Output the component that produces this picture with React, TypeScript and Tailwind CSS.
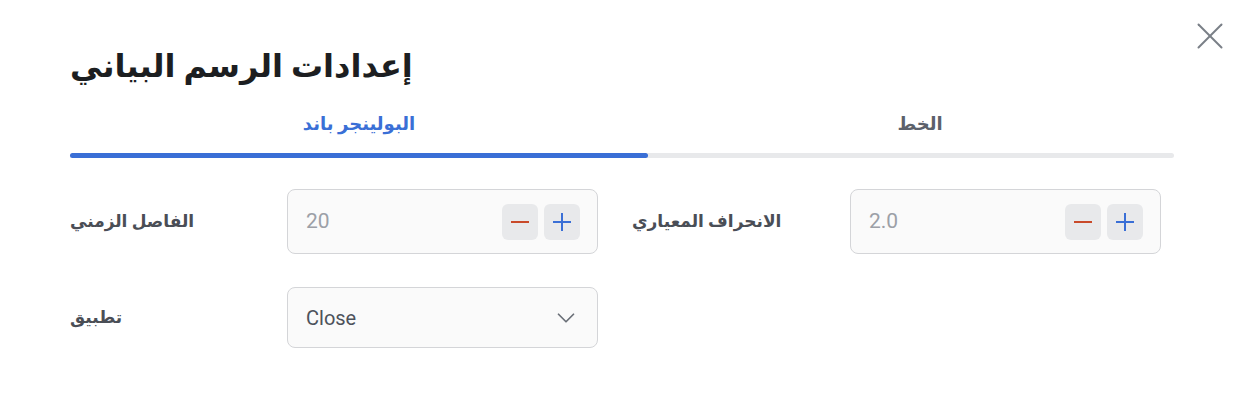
import { ChevronDown } from 'lucide-react';

const FONT = "font-[Roboto,'DejaVu_Sans',sans-serif]";

function Stepper({ value }: { value: string }) {
  return (
    <div className="flex h-[65px] w-[311px] items-center justify-between rounded-lg border border-[#d4d5d8] bg-[#fafafa] pl-[18px] pr-[17px]">
      <span className="text-[21px] text-[#9ca0a7]">{value}</span>
      <div className="flex gap-[6px]">
        <button type="button" className="flex h-[36px] w-[36px] items-center justify-center rounded-md bg-[#e8e9eb] text-[#c94a2a]">
          <svg viewBox="0 0 24 24" className="h-[24px] w-[24px]" fill="none" stroke="currentColor" strokeWidth="2">
            <line x1="3" y1="12" x2="21" y2="12" />
          </svg>
        </button>
        <button type="button" className="flex h-[36px] w-[36px] items-center justify-center rounded-md bg-[#e8e9eb] text-[#3a6fd6]">
          <svg viewBox="0 0 24 24" className="h-[24px] w-[24px]" fill="none" stroke="currentColor" strokeWidth="2">
            <line x1="3" y1="12" x2="21" y2="12" />
            <line x1="12" y1="3" x2="12" y2="21" />
          </svg>
        </button>
      </div>
    </div>
  );
}

export default function App() {
  return (
    <div className={`relative h-[418px] w-[1246px] bg-white ${FONT}`}>
      <button type="button" className="absolute left-[1196px] top-[22px] text-[#7a7f87]">
        <svg viewBox="0 0 28 28" className="h-[28px] w-[28px]" fill="none" stroke="currentColor" strokeWidth="2" strokeLinecap="round">
          <line x1="2.5" y1="2.5" x2="25.5" y2="25.5" />
          <line x1="25.5" y1="2.5" x2="2.5" y2="25.5" />
        </svg>
      </button>

      <div className="pl-[70px] pr-[72px] pt-[44px]">
        <h1 className="text-[32px] font-bold leading-[44px] text-[#1c1e21]">إعدادات الرسم البياني</h1>

        {/* Tabs */}
        <div className="mt-[24px] flex">
          <div className="w-[578px] text-center text-[18px] font-semibold leading-[24px] text-[#3a6fd6]">البولينجر باند</div>
          <div className="flex-1 pl-[18px] text-center text-[18px] font-semibold leading-[24px] text-[#5c616b]">الخط</div>
        </div>
        <div className="mt-[17px] flex h-[5px] rounded-full bg-[#e8e9eb]">
          <div className="w-[578px] rounded-full bg-[#3a6fd6]" />
        </div>

        {/* Fields */}
        <div className="mt-[31px] flex">
          <div className="flex w-[562px] items-center">
            <span className="w-[217px] text-[17px] font-semibold text-[#4a4e56]">الفاصل الزمني</span>
            <Stepper value="20" />
          </div>
          <div className="flex items-center">
            <span className="w-[218px] text-[17px] font-semibold text-[#4a4e56]">الانحراف المعياري</span>
            <Stepper value="2.0" />
          </div>
        </div>

        <div className="mt-[33px] flex items-center">
          <span className="w-[217px] text-[17px] font-semibold text-[#4a4e56]">تطبيق</span>
          <div className="flex h-[61px] w-[311px] items-center justify-between rounded-lg border border-[#d4d5d8] bg-[#fafafa] pl-[18px] pr-[16px]">
            <span className="text-[20px] text-[#4d525b]">Close</span>
            <ChevronDown className="h-[30px] w-[30px] text-[#6b7078]" strokeWidth={1.4} />
          </div>
        </div>
      </div>
    </div>
  );
}
